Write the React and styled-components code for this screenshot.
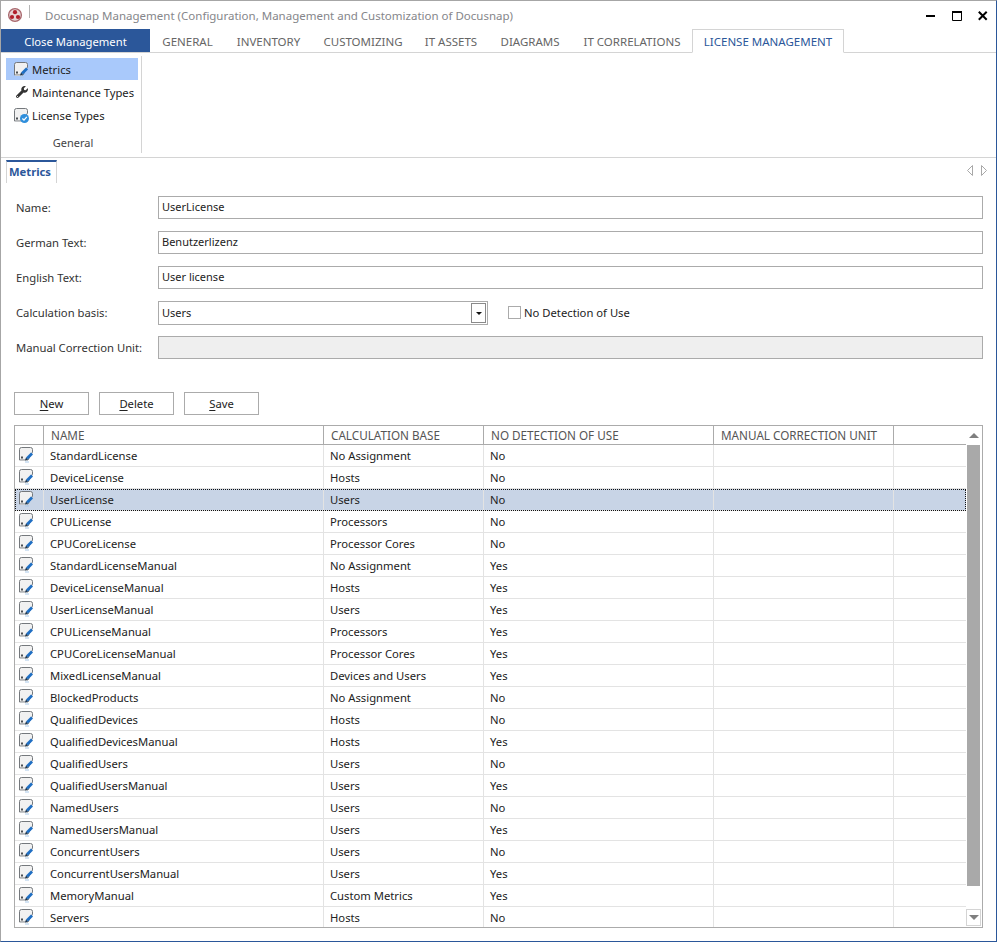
import React from "react";
import styled, { createGlobalStyle } from "styled-components";
import { FaWrench } from "react-icons/fa";

const rows = [
  ["StandardLicense", "No Assignment", "No"],
  ["DeviceLicense", "Hosts", "No"],
  ["UserLicense", "Users", "No"],
  ["CPULicense", "Processors", "No"],
  ["CPUCoreLicense", "Processor Cores", "No"],
  ["StandardLicenseManual", "No Assignment", "Yes"],
  ["DeviceLicenseManual", "Hosts", "Yes"],
  ["UserLicenseManual", "Users", "Yes"],
  ["CPULicenseManual", "Processors", "Yes"],
  ["CPUCoreLicenseManual", "Processor Cores", "Yes"],
  ["MixedLicenseManual", "Devices and Users", "Yes"],
  ["BlockedProducts", "No Assignment", "No"],
  ["QualifiedDevices", "Hosts", "No"],
  ["QualifiedDevicesManual", "Hosts", "Yes"],
  ["QualifiedUsers", "Users", "No"],
  ["QualifiedUsersManual", "Users", "Yes"],
  ["NamedUsers", "Users", "No"],
  ["NamedUsersManual", "Users", "Yes"],
  ["ConcurrentUsers", "Users", "No"],
  ["ConcurrentUsersManual", "Users", "Yes"],
  ["MemoryManual", "Custom Metrics", "Yes"],
  ["Servers", "Hosts", "No"],
];

const Logo = () => (
  <svg width="16" height="16" viewBox="0 0 16 16">
    <circle cx="8" cy="8" r="6.4" fill="#e6d3d4" stroke="#a8666c" strokeWidth="1.3" />
    <circle cx="8" cy="5.2" r="2.1" fill="#b01e2a" />
    <circle cx="5" cy="10" r="2.1" fill="#b01e2a" />
    <circle cx="11" cy="10" r="2.1" fill="#b01e2a" />
  </svg>
);

const PageShape = () => (
  <>
    <path d="M1.5 14 V3.5 Q1.5 1.5 3.5 1.5 H12.5 Q14.5 1.5 14.5 3.5 V6 L10 14 Z" fill="#f1f1f1" stroke="#74787c" strokeWidth="1" />
    <path d="M2 14.5 H8.5" stroke="#c4c6c8" strokeWidth="1" />
    <rect x="3" y="10.5" width="2" height="2" fill="#4a4e52" />
  </>
);

const MetricIcon = () => (
  <svg width="17" height="17" viewBox="0 0 17 17">
    <PageShape />
    <path d="M8 11.5 L13 6.5 L15 8.5 L10 13.5 Z" fill="#1f6fc4" />
    <path d="M7 14.5 L8 11.5 L10 13.5 Z" fill="#15324f" />
    <path d="M7 16 H11" stroke="#a8c8e8" strokeWidth="1" />
  </svg>
);

const LicenseIcon = () => (
  <svg width="17" height="17" viewBox="0 0 17 17">
    <PageShape />
    <circle cx="11.5" cy="11.5" r="4.5" fill="#2f8fdc" />
    <path d="M9.4 11.5 L11 13.1 L13.8 9.9" fill="none" stroke="#fff" strokeWidth="1.3" />
  </svg>
);

const GlobalStyle = createGlobalStyle`
  html, body {
    margin: 0;
    padding: 0;
    background: #fff;
  }
  body {
    font-family: "Noto Sans", "Open Sans", sans-serif;
    font-size: 11.25px;
    color: #222;
  }
`;

const Window = styled.div`
  box-sizing: border-box;
  width: 997px;
  height: 942px;
  overflow: hidden;
  background: #fff;
  border-top: 1px solid #a6a6a6;
  border-left: 1px solid #a6a6a6;
  border-right: 1px solid #2b579a;
  border-bottom: 1px solid #2b579a;
  display: flex;
  flex-direction: column;
`;

const TitleBar = styled.div`
  height: 28px;
  flex: none;
  display: flex;
  align-items: center;
  padding: 0 8px 0 6px;
`;

const QuickBar = styled.div`
  display: flex;
  align-items: center;
  width: 38px;
  gap: 6px;
  svg {
    display: block;
  }
  i {
    display: block;
    width: 1px;
    height: 13px;
    margin-top: -7px;
    background: #b5b5b5;
  }
`;

const Title = styled.div`
  flex: 1;
  color: #85868a;
  font-size: 11.5px;
`;

const WindowButtons = styled.div`
  display: flex;
  align-items: center;
  gap: 16px;
  margin-top: 2px;
  svg {
    display: block;
  }
`;

const TabBar = styled.div`
  height: 24px;
  flex: none;
  box-sizing: border-box;
  display: flex;
  border-bottom: 1px solid #d4d4d4;
`;

const CloseManagement = styled.div`
  width: 149px;
  height: 23px;
  padding-top: 1px;
  box-sizing: border-box;
  background: #2b579a;
  color: #fff;
  display: flex;
  align-items: center;
  justify-content: center;
`;

const Tab = styled.div`
  box-sizing: border-box;
  height: ${(p) => (p.$active ? "24px" : "23px")};
  width: ${(p) => p.$w}px;
  display: flex;
  align-items: center;
  justify-content: center;
  color: ${(p) => (p.$active ? "#2b579a" : "#666")};
  background: #fff;
  font-size: 11.5px;
  border: 1px solid ${(p) => (p.$active ? "#d4d4d4" : "transparent")};
  border-bottom: ${(p) => (p.$active ? "1px solid #fff" : "none")};
`;

const Ribbon = styled.div`
  height: 105px;
  flex: none;
  box-sizing: border-box;
  padding: 3px 0 4px 5px;
  border-bottom: 1px solid #d4d4d4;
  display: flex;
`;

const RibbonGroup = styled.div`
  width: 136px;
  box-sizing: border-box;
  padding: 2px 3px 0 0;
  border-right: 1px solid #d4d4d4;
  display: flex;
  flex-direction: column;
`;

const RibbonItem = styled.div`
  height: 22px;
  margin-bottom: 1px;
  display: flex;
  align-items: center;
  gap: 2px;
  padding-left: 7px;
  background: ${(p) => (p.$active ? "#a9c9fb" : "transparent")};
  white-space: nowrap;
  svg {
    flex: none;
  }
`;

const WrenchSlot = styled.span`
  width: 17px;
  height: 17px;
  flex: none;
  display: flex;
  align-items: center;
  justify-content: center;
  font-size: 12px;
  color: #333;
`;

const GroupLabel = styled.div`
  margin-top: auto;
  padding: 0 0 3px 2px;
  text-align: center;
  color: #444;
  font-size: 11px;
`;

const DocStrip = styled.div`
  box-sizing: border-box;
  height: 25px;
  flex: none;
  padding: 2px 9px 0 5px;
  display: flex;
  justify-content: space-between;
  align-items: flex-start;
`;

const DocTab = styled.div`
  box-sizing: border-box;
  width: 51px;
  height: 23px;
  padding: 0 3px 2px 0;
  border-top: 2px solid #2b579a;
  border-left: 1px solid #d4d4d4;
  border-right: 1px solid #d4d4d4;
  color: #2b579a;
  font-weight: 700;
  display: flex;
  align-items: center;
  justify-content: center;
`;

const DocNav = styled.div`
  display: flex;
  gap: 8px;
  padding-top: 5px;
  svg {
    display: block;
  }
`;

const Form = styled.div`
  padding: 13px 13px 0 15px;
  display: flex;
  flex-direction: column;
  gap: 12px;
`;

const FormRow = styled.div`
  height: 23px;
  display: flex;
  align-items: flex-start;
`;

const Label = styled.div`
  width: 142px;
  height: 23px;
  flex: none;
  display: flex;
  align-items: center;
  color: #333;
`;

const Field = styled.div`
  box-sizing: border-box;
  flex: ${(p) => (p.$w ? "none" : "1")};
  width: ${(p) => (p.$w ? `${p.$w}px` : "auto")};
  height: 23px;
  border: 1px solid #ababab;
  background: ${(p) => (p.$disabled ? "#efefef" : "#fff")};
  padding: 0 2px;
  display: flex;
  align-items: center;
  color: #222;
`;

const FieldText = styled.span`
  margin: 0 0 2px 1px;
  font-size: 11px;
`;

const Combo = styled(Field)`
  height: 24px;
  padding-right: 1px;
  justify-content: space-between;
`;

const ComboButton = styled.div`
  box-sizing: border-box;
  width: 15px;
  height: 20px;
  border: 1px solid #8a8a8a;
  display: flex;
  align-items: center;
  justify-content: center;
  &::after {
    content: "";
    border-left: 3px solid transparent;
    border-right: 3px solid transparent;
    border-top: 3px solid #111;
  }
`;

const CheckWrap = styled.div`
  height: 23px;
  display: flex;
  align-items: center;
  gap: 3px;
  margin-left: 20px;
  color: #222;
`;

const CheckBox = styled.div`
  box-sizing: border-box;
  width: 13px;
  height: 13px;
  border: 1px solid #ababab;
`;

const Actions = styled.div`
  display: flex;
  gap: 10px;
  padding: 33px 0 0 13px;
`;

const Button = styled.div`
  box-sizing: border-box;
  width: 75px;
  height: 23px;
  border: 1px solid #ababab;
  display: flex;
  align-items: center;
  justify-content: center;
  color: #222;
  u {
    text-underline-offset: 2px;
  }
`;

const Grid = styled.div`
  box-sizing: border-box;
  width: 969px;
  height: 503px;
  margin: 10px 0 0 13px;
  border: 1px solid #ababab;
  display: flex;
`;

const GridBody = styled.div`
  flex: 1;
  min-width: 0;
  overflow: hidden;
`;

const Row = styled.div`
  box-sizing: border-box;
  display: grid;
  grid-template-columns: 29px 280px 160px 230px 180px 1fr;
  height: ${(p) => (p.$head ? "19px" : "22px")};
  border-bottom: 1px solid ${(p) => (p.$head ? "#ababab" : "#e3e3e3")};
  background: ${(p) => (p.$selected ? "#c8d4e6" : "#fff")};
  outline: ${(p) => (p.$selected ? "1px dotted #111" : "none")};
  outline-offset: -1px;
`;

const Cell = styled.div`
  box-sizing: border-box;
  border-right: 1px solid ${(p) => (p.$head ? "#ababab" : "#e3e3e3")};
  display: flex;
  align-items: center;
  padding-left: ${(p) => (p.$head ? "7px" : "6px")};
  color: ${(p) => (p.$head ? "#555" : "#222")};
  font-size: ${(p) => (p.$head ? "11.7px" : "inherit")};
  white-space: nowrap;
  &:last-child {
    border-right: none;
  }
`;

const IconCell = styled(Cell)`
  padding-left: 3px;
  align-items: flex-start;
  svg {
    display: block;
    margin-top: 1px;
  }
`;

const ScrollBar = styled.div`
  width: 16px;
  flex: none;
  display: flex;
  flex-direction: column;
  padding-right: 1px;
  box-sizing: border-box;
`;

const ScrollButton = styled.div`
  box-sizing: border-box;
  height: ${(p) => (p.$down ? "17px" : "18px")};
  margin-bottom: ${(p) => (p.$down ? "1px" : "0")};
  border: 1px solid ${(p) => (p.$down ? "#d4d4d4" : "#fff")};
  display: flex;
  align-items: center;
  justify-content: center;
  &::after {
    content: "";
    border-left: 5px solid transparent;
    border-right: 5px solid transparent;
    ${(p) => (p.$down ? "border-top: 5px solid #7f7f7f;" : "border-bottom: 5px solid #7f7f7f;")}
  }
`;

const Thumb = styled.div`
  height: 441px;
  margin: 1px 1px 0;
  background: #a9a9a9;
`;

const ScrollGap = styled.div`
  flex: 1;
`;

export default function App() {
  return (
    <Window>
      <GlobalStyle />
      <TitleBar>
        <QuickBar>
          <Logo />
          <i />
        </QuickBar>
        <Title>Docusnap Management (Configuration, Management and Customization of Docusnap)</Title>
        <WindowButtons>
          <svg width="10" height="10" viewBox="0 0 10 10">
            <rect x="0" y="4" width="9" height="2" fill="#000" />
          </svg>
          <svg width="10" height="10" viewBox="0 0 10 10">
            <path d="M.5 1.5 H9.5 V9.5 H.5 Z" fill="none" stroke="#000" />
            <rect x="0" y="0" width="10" height="2" fill="#000" />
          </svg>
          <svg width="10" height="10" viewBox="0 0 10 10">
            <path d="M.8 .8 L8.7 8.7 M8.7 .8 L.8 8.7" stroke="#000" strokeWidth="2" />
          </svg>
        </WindowButtons>
      </TitleBar>

      <TabBar>
        <CloseManagement>Close Management</CloseManagement>
        <Tab $w={75}>GENERAL</Tab>
        <Tab $w={87}>INVENTORY</Tab>
        <Tab $w={102}>CUSTOMIZING</Tab>
        <Tab $w={74}>IT ASSETS</Tab>
        <Tab $w={84}>DIAGRAMS</Tab>
        <Tab $w={120}>IT CORRELATIONS</Tab>
        <Tab $w={152} $active>LICENSE MANAGEMENT</Tab>
      </TabBar>

      <Ribbon>
        <RibbonGroup>
          <RibbonItem $active><MetricIcon />Metrics</RibbonItem>
          <RibbonItem><WrenchSlot><FaWrench /></WrenchSlot>Maintenance Types</RibbonItem>
          <RibbonItem><LicenseIcon />License Types</RibbonItem>
          <GroupLabel>General</GroupLabel>
        </RibbonGroup>
      </Ribbon>

      <DocStrip>
        <DocTab>Metrics</DocTab>
        <DocNav>
          <svg width="6" height="11" viewBox="0 0 6 11">
            <path d="M5.5 .5 V10.5 L.5 5.5 Z" fill="none" stroke="#a8a8a8" />
          </svg>
          <svg width="6" height="11" viewBox="0 0 6 11">
            <path d="M.5 .5 V10.5 L5.5 5.5 Z" fill="none" stroke="#a8a8a8" />
          </svg>
        </DocNav>
      </DocStrip>

      <Form>
        <FormRow><Label>Name:</Label><Field><FieldText>UserLicense</FieldText></Field></FormRow>
        <FormRow><Label>German Text:</Label><Field><FieldText>Benutzerlizenz</FieldText></Field></FormRow>
        <FormRow><Label>English Text:</Label><Field><FieldText>User license</FieldText></Field></FormRow>
        <FormRow>
          <Label>Calculation basis:</Label>
          <Combo $w={330}><FieldText>Users</FieldText><ComboButton /></Combo>
          <CheckWrap><CheckBox />No Detection of Use</CheckWrap>
        </FormRow>
        <FormRow><Label>Manual Correction Unit:</Label><Field $disabled /></FormRow>
      </Form>

      <Actions>
        <Button><span><u>N</u>ew</span></Button>
        <Button><span><u>D</u>elete</span></Button>
        <Button><span><u>S</u>ave</span></Button>
      </Actions>

      <Grid>
        <GridBody>
          <Row $head>
            <Cell $head />
            <Cell $head>NAME</Cell>
            <Cell $head>CALCULATION BASE</Cell>
            <Cell $head>NO DETECTION OF USE</Cell>
            <Cell $head>MANUAL CORRECTION UNIT</Cell>
            <Cell $head />
          </Row>
          {rows.map(([name, base, detect]) => (
            <Row key={name} $selected={name === "UserLicense"}>
              <IconCell><MetricIcon /></IconCell>
              <Cell>{name}</Cell>
              <Cell>{base}</Cell>
              <Cell>{detect}</Cell>
              <Cell />
              <Cell />
            </Row>
          ))}
        </GridBody>
        <ScrollBar>
          <ScrollButton />
          <Thumb />
          <ScrollGap />
          <ScrollButton $down />
        </ScrollBar>
      </Grid>
    </Window>
  );
}
